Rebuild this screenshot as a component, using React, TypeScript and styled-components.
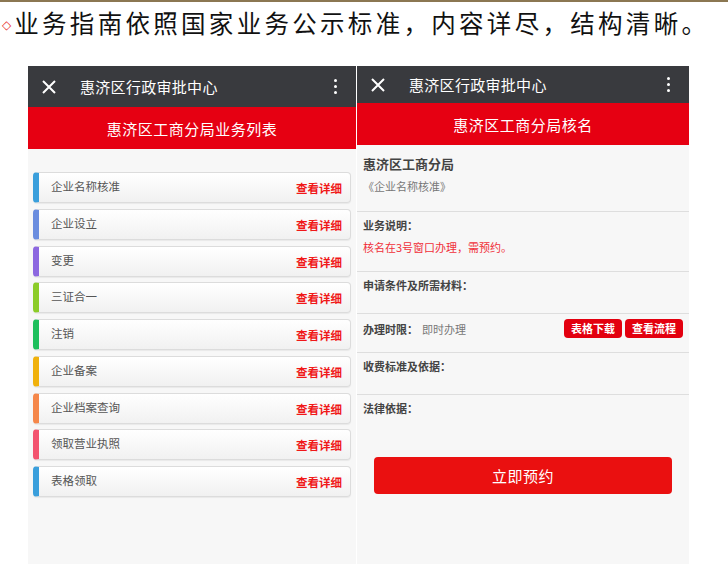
import React from "react"
import styled, { createGlobalStyle } from "styled-components"

const GlobalStyle = createGlobalStyle`
  html, body {
    margin: 0;
    padding: 0;
    background: #ffffff;
    font-family: "Noto Sans CJK SC", "Noto Sans", "Liberation Sans", sans-serif;
  }
`

const Page = styled.div`
  width: 728px;
  height: 564px;
  overflow: hidden;
  border-top: 2px solid #8b7752;
  box-sizing: border-box;
  display: flex;
  flex-direction: column;
`

const Headline = styled.div`
  height: 64px;
  display: flex;
  align-items: flex-start;
  padding: 5px 0 0 2px;
  box-sizing: border-box;
  font-size: 24.5px;
  line-height: 32px;
  color: #111;
  letter-spacing: 3.3px;
  white-space: nowrap;
`

const Diamond = styled.span`
  color: #e8322e;
  font-size: 12px;
  letter-spacing: 0;
  margin: 2px 3px 0 0;
  font-family: "DejaVu Sans", sans-serif;
`

const Phones = styled.div`
  display: flex;
  gap: 1px;
  padding-left: 28px;
  flex: 1;
`

const Phone = styled.div<{ $width: number }>`
  width: ${p => p.$width}px;
  background: #f7f7f7;
  display: flex;
  flex-direction: column;
`

const TopBar = styled.div<{ $height: number }>`
  height: ${p => p.$height}px;
  background: #393a3e;
  display: flex;
  align-items: center;
  color: #fff;
  padding: 0 19px 0 12px;
`

const Close = styled.div`
  width: 18px;
  display: flex;
  justify-content: center;
  margin-right: 22px;
`

const TopTitle = styled.div`
  flex: 1;
  font-size: 15px;
  letter-spacing: 0.3px;
`

const Kebab = styled.div`
  display: flex;
  flex-direction: column;
  gap: 3px;
  span {
    width: 3px;
    height: 3px;
    border-radius: 50%;
    background: #fff;
  }
`

const RedBar = styled.div<{ $height: number }>`
  height: ${p => p.$height}px;
  background: #e60012;
  color: #fff;
  font-size: 15px;
  display: flex;
  align-items: center;
  justify-content: center;
  letter-spacing: 0.5px;
`

const List = styled.div`
  padding: 23px 5px 0 5px;
  display: flex;
  flex-direction: column;
  gap: 5.75px;
`

const Card = styled.div<{ $color: string }>`
  height: 31px;
  box-sizing: border-box;
  border-radius: 4px;
  border: 1px solid #dcdcdc;
  border-left: 6px solid ${p => p.$color};
  background: linear-gradient(#ffffff, #f1f1f1);
  box-shadow: 0 1px 1px rgba(0, 0, 0, 0.06);
  display: flex;
  align-items: center;
  padding: 0 8px 0 12px;
  font-size: 11.5px;
`

const CardLabel = styled.div`
  flex: 1;
  color: #555;
  margin-top: -3px;
`

const CardLink = styled.div`
  color: #f01818;
  font-weight: bold;
  margin-top: 1px;
`

const Section = styled.div<{ $height: number; $top?: number; $last?: boolean }>`
  height: ${p => p.$height}px;
  border-bottom: ${p => (p.$last ? "none" : "1px solid #dedede")};
  padding: ${p => p.$top ?? 5}px 6px 0 6px;
  box-sizing: border-box;
  display: flex;
  flex-direction: column;
`

const OrgName = styled.div`
  font-size: 13px;
  font-weight: bold;
  color: #444;
  line-height: 20px;
`

const OrgSub = styled.div`
  font-size: 11px;
  color: #777;
  margin-top: 4px;
`

const Label = styled.div`
  font-size: 11px;
  font-weight: bold;
  color: #444;
  line-height: 16px;
`

const Note = styled.div`
  font-size: 11px;
  color: #f0303a;
  margin-top: 6px;
`

const Row = styled.div`
  display: flex;
  align-items: center;
`

const Value = styled.span`
  font-size: 11px;
  color: #777;
  font-weight: normal;
  margin-left: 4px;
`

const Tags = styled.div`
  margin-left: auto;
  display: flex;
  gap: 3px;
  margin-top: 5px;
`

const Tag = styled.div`
  background: #e3000f;
  color: #fff;
  font-size: 11px;
  font-weight: bold;
  padding: 0 7px;
  height: 19px;
  line-height: 19px;
  border-radius: 4px;
`

const Book = styled.div`
  margin: 0 17px;
  height: 37px;
  background: #ea1010;
  border-radius: 4px;
  color: #fff;
  font-size: 15px;
  display: flex;
  align-items: center;
  justify-content: center;
  letter-spacing: 0.5px;
`

const CloseIcon = () => (
  <svg width="14" height="14" viewBox="0 0 14 14">
    <path d="M1 1 L13 13 M13 1 L1 13" stroke="#fff" strokeWidth="2" />
  </svg>
)

const items = [
  { label: "企业名称核准", color: "#3a9fdc" },
  { label: "企业设立", color: "#6a8ddf" },
  { label: "变更", color: "#8c67e0" },
  { label: "三证合一", color: "#8ccc28" },
  { label: "注销", color: "#1dbf5c" },
  { label: "企业备案", color: "#f0b10c" },
  { label: "企业档案查询", color: "#f5874a" },
  { label: "领取营业执照", color: "#f3536f" },
  { label: "表格领取", color: "#3a9fdc" },
]

const Header = ({ height }: { height: number }) => (
  <TopBar $height={height}>
    <Close>
      <CloseIcon />
    </Close>
    <TopTitle>惠济区行政审批中心</TopTitle>
    <Kebab>
      <span />
      <span />
      <span />
    </Kebab>
  </TopBar>
)

export default function App() {
  return (
    <Page>
      <GlobalStyle />
      <Headline>
        <Diamond>◇</Diamond>
        业务指南依照国家业务公示标准，内容详尽，结构清晰。
      </Headline>
      <Phones>
        <Phone $width={328}>
          <Header height={41} />
          <RedBar $height={42}>惠济区工商分局业务列表</RedBar>
          <List>
            {items.map(item => (
              <Card key={item.label} $color={item.color}>
                <CardLabel>{item.label}</CardLabel>
                <CardLink>查看详细</CardLink>
              </Card>
            ))}
          </List>
        </Phone>
        <Phone $width={332}>
          <Header height={37} />
          <RedBar $height={42}>惠济区工商分局核名</RedBar>
          <Section $height={67} $top={9}>
            <OrgName>惠济区工商分局</OrgName>
            <OrgSub>《企业名称核准》</OrgSub>
          </Section>
          <Section $height={60}>
            <Label>业务说明：</Label>
            <Note>核名在3号窗口办理，需预约。</Note>
          </Section>
          <Section $height={42}>
            <Label>申请条件及所需材料：</Label>
          </Section>
          <Section $height={39} $top={0}>
            <Row>
              <Label style={{ marginTop: 5 }}>
                办理时限：<Value>即时办理</Value>
              </Label>
              <Tags>
                <Tag>表格下载</Tag>
                <Tag>查看流程</Tag>
              </Tags>
            </Row>
          </Section>
          <Section $height={42}>
            <Label>收费标准及依据：</Label>
          </Section>
          <Section $height={62} $last>
            <Label>法律依据：</Label>
          </Section>
          <Book>立即预约</Book>
        </Phone>
      </Phones>
    </Page>
  )
}
